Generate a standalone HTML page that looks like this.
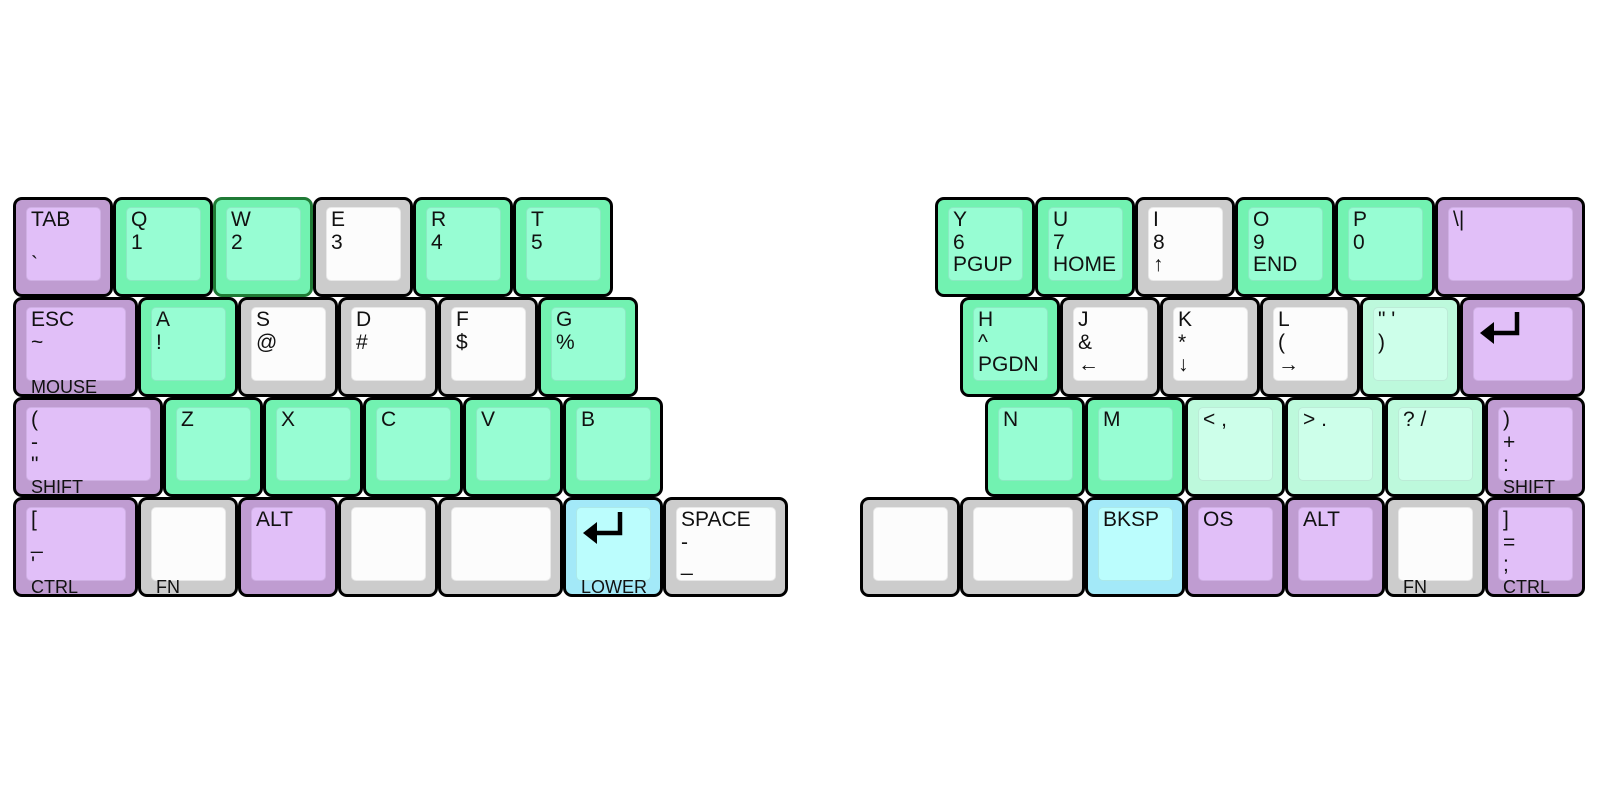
<!DOCTYPE html>
<html><head><meta charset="utf-8"><style>
body{margin:0;width:1600px;height:800px;background:#fff;position:relative;overflow:hidden;font-family:"Liberation Sans",Arial,sans-serif;}
.k{position:absolute;height:100px;box-sizing:border-box;border:3px solid #000;border-radius:9px;overflow:hidden;}
.f{position:absolute;left:10px;right:9px;top:7px;bottom:13px;border-radius:5px;box-sizing:border-box;border:1.5px solid rgba(0,0,0,0.08);}
.t{position:absolute;left:15px;top:9px;font-size:21px;line-height:22.5px;color:#111;white-space:pre;}
.b{position:absolute;left:15px;top:77px;font-size:18px;line-height:20px;color:#111;}
.p{background:#bf9cd1}.p .f{background:#e1bff8}
.g{background:#72f2b1}.g .f{background:#97fdd3}
.w{background:#cccccc}.w .f{background:#fcfcfc}
.m{background:#bdf9dc}.m .f{background:#cdffea}
.c{background:#a3e9f8}.c .f{background:#bbfdfd}
.r1{top:197px}.r2{top:297px}.r3{top:397px}.r4{top:497px}
.u1{width:100px}.u125{width:125px}.u15{width:150px}
svg.e{position:absolute;left:14px;top:10px}
</style></head><body>
<!-- LEFT -->
<div class="k p r1 u1" style="left:13px"><div class="f"></div><div class="t">TAB

`</div></div>
<div class="k g r1 u1" style="left:113px"><div class="f"></div><div class="t">Q
1</div></div>
<div class="k g r1 u1" style="left:213px;border-color:#1f7a35"><div class="f"></div><div class="t">W
2</div></div>
<div class="k w r1 u1" style="left:313px"><div class="f"></div><div class="t">E
3</div></div>
<div class="k g r1 u1" style="left:413px"><div class="f"></div><div class="t">R
4</div></div>
<div class="k g r1 u1" style="left:513px"><div class="f"></div><div class="t">T
5</div></div>

<div class="k p r2 u125" style="left:13px"><div class="f"></div><div class="t">ESC
~</div><div class="b">MOUSE</div></div>
<div class="k g r2 u1" style="left:138px"><div class="f"></div><div class="t">A
!</div></div>
<div class="k w r2 u1" style="left:238px"><div class="f"></div><div class="t">S
@</div></div>
<div class="k w r2 u1" style="left:338px"><div class="f"></div><div class="t">D
#</div></div>
<div class="k w r2 u1" style="left:438px"><div class="f"></div><div class="t">F
$</div></div>
<div class="k g r2 u1" style="left:538px"><div class="f"></div><div class="t">G
%</div></div>

<div class="k p r3 u15" style="left:13px"><div class="f"></div><div class="t">(
-
"</div><div class="b">SHIFT</div></div>
<div class="k g r3 u1" style="left:163px"><div class="f"></div><div class="t">Z</div></div>
<div class="k g r3 u1" style="left:263px"><div class="f"></div><div class="t">X</div></div>
<div class="k g r3 u1" style="left:363px"><div class="f"></div><div class="t">C</div></div>
<div class="k g r3 u1" style="left:463px"><div class="f"></div><div class="t">V</div></div>
<div class="k g r3 u1" style="left:563px"><div class="f"></div><div class="t">B</div></div>

<div class="k p r4 u125" style="left:13px"><div class="f"></div><div class="t">[
_
'</div><div class="b">CTRL</div></div>
<div class="k w r4 u1" style="left:138px"><div class="f"></div><div class="b">FN</div></div>
<div class="k p r4 u1" style="left:238px"><div class="f"></div><div class="t">ALT</div></div>
<div class="k w r4 u1" style="left:338px"><div class="f"></div></div>
<div class="k w r4 u125" style="left:438px"><div class="f"></div></div>
<div class="k c r4 u1" style="left:563px"><div class="f"></div><svg class="e" width="46" height="38"><path d="M40 2V23H15" fill="none" stroke="#000" stroke-width="4.5"/><path d="M3 23L17 12V34Z" fill="#000"/></svg><div class="b">LOWER</div></div>
<div class="k w r4 u125" style="left:663px"><div class="f"></div><div class="t">SPACE
-
_</div></div>

<!-- RIGHT -->
<div class="k g r1 u1" style="left:935px"><div class="f"></div><div class="t">Y
6
PGUP</div></div>
<div class="k g r1 u1" style="left:1035px"><div class="f"></div><div class="t">U
7
HOME</div></div>
<div class="k w r1 u1" style="left:1135px"><div class="f"></div><div class="t">I
8
↑</div></div>
<div class="k g r1 u1" style="left:1235px"><div class="f"></div><div class="t">O
9
END</div></div>
<div class="k g r1 u1" style="left:1335px"><div class="f"></div><div class="t">P
0</div></div>
<div class="k p r1 u15" style="left:1435px"><div class="f"></div><div class="t">\|</div></div>

<div class="k g r2 u1" style="left:960px"><div class="f"></div><div class="t">H
^
PGDN</div></div>
<div class="k w r2 u1" style="left:1060px"><div class="f"></div><div class="t">J
&amp;
←</div></div>
<div class="k w r2 u1" style="left:1160px"><div class="f"></div><div class="t">K
*
↓</div></div>
<div class="k w r2 u1" style="left:1260px"><div class="f"></div><div class="t">L
(
→</div></div>
<div class="k m r2 u1" style="left:1360px"><div class="f"></div><div class="t">" '
)</div></div>
<div class="k p r2 u125" style="left:1460px"><div class="f"></div><svg class="e" width="46" height="38"><path d="M40 2V23H15" fill="none" stroke="#000" stroke-width="4.5"/><path d="M3 23L17 12V34Z" fill="#000"/></svg></div>

<div class="k g r3 u1" style="left:985px"><div class="f"></div><div class="t">N</div></div>
<div class="k g r3 u1" style="left:1085px"><div class="f"></div><div class="t">M</div></div>
<div class="k m r3 u1" style="left:1185px"><div class="f"></div><div class="t">&lt; ,</div></div>
<div class="k m r3 u1" style="left:1285px"><div class="f"></div><div class="t">&gt; .</div></div>
<div class="k m r3 u1" style="left:1385px"><div class="f"></div><div class="t">? /</div></div>
<div class="k p r3 u1" style="left:1485px"><div class="f"></div><div class="t">)
+
:</div><div class="b">SHIFT</div></div>

<div class="k w r4 u1" style="left:860px"><div class="f"></div></div>
<div class="k w r4 u125" style="left:960px"><div class="f"></div></div>
<div class="k c r4 u1" style="left:1085px"><div class="f"></div><div class="t">BKSP</div></div>
<div class="k p r4 u1" style="left:1185px"><div class="f"></div><div class="t">OS</div></div>
<div class="k p r4 u1" style="left:1285px"><div class="f"></div><div class="t">ALT</div></div>
<div class="k w r4 u1" style="left:1385px"><div class="f"></div><div class="b">FN</div></div>
<div class="k p r4 u1" style="left:1485px"><div class="f"></div><div class="t">]
=
;</div><div class="b">CTRL</div></div>
</body></html>
